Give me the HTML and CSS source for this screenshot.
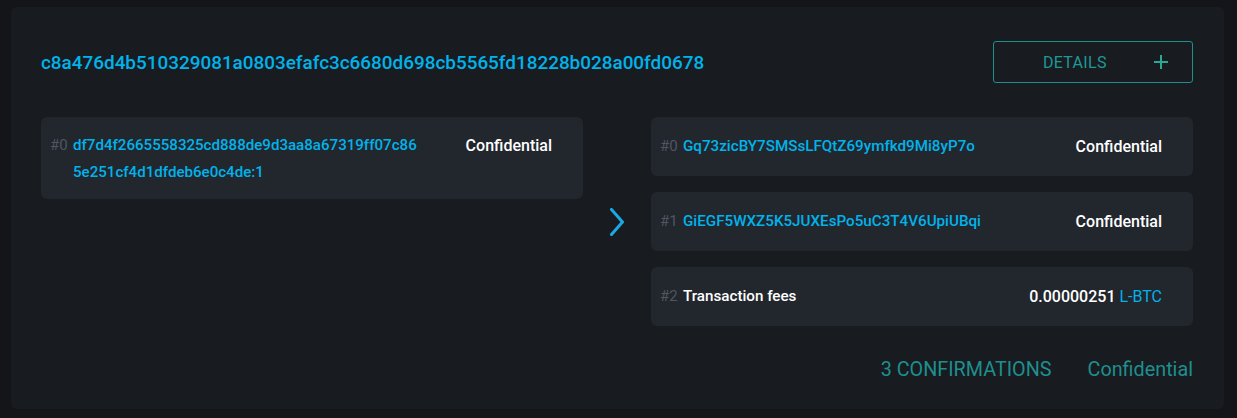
FILE: index.html
```html
<!DOCTYPE html>
<html>
<head>
<meta charset="utf-8">
<link rel="stylesheet" href="styles.css">
</head>
<body>
<div class="card">
  <div class="header">
    <a class="txid">c8a476d4b510329081a0803efafc3c6680d698cb5565fd18228b028a00fd0678</a>
    <button class="details"><span class="details-label">DETAILS</span><span class="plus"></span></button>
  </div>
  <div class="io">
    <div class="col ins">
      <div class="row row-in">
        <span class="idx">#0</span>
        <a class="addr addr-in">df7d4f2665558325cd888de9d3aa8a67319ff07c865e251cf4d1dfdeb6e0c4de:1</a>
        <span class="amt">Confidential</span>
      </div>
    </div>
    <div class="arrow">
      <svg width="16" height="28" viewBox="0 0 16 28"><path d="M2.5 1.5 L13.5 14 L2.5 26.5" fill="none" stroke="#1aa9e2" stroke-width="3" stroke-linecap="round" stroke-linejoin="round"/></svg>
    </div>
    <div class="col outs">
      <div class="row">
        <span class="idx">#0</span>
        <a class="addr">Gq73zicBY7SMSsLFQtZ69ymfkd9Mi8yP7o</a>
        <span class="amt">Confidential</span>
      </div>
      <div class="row">
        <span class="idx">#1</span>
        <a class="addr">GiEGF5WXZ5K5JUXEsPo5uC3T4V6UpiUBqi</a>
        <span class="amt">Confidential</span>
      </div>
      <div class="row">
        <span class="idx">#2</span>
        <span class="label">Transaction fees</span>
        <span class="amt">0.00000251 <span class="unit">L-BTC</span></span>
      </div>
    </div>
  </div>
  <div class="footer">
    <span>3 CONFIRMATIONS</span>
    <span>Confidential</span>
  </div>
</div>
</body>
</html>
```
FILE: styles.css
```css
html, body {
  margin: 0;
  padding: 0;
  background: #131519;
}
body {
  padding: 7px 13px 11px 11px;
  font-family: Roboto, "Liberation Sans", sans-serif;
  color: #ffffff;
}
.card {
  background: #181b20;
  border-radius: 6px;
  padding: 34px 31px 28px 30px;
}
.header {
  display: flex;
  align-items: center;
  justify-content: space-between;
  height: 42px;
}
.txid {
  color: #00b3ea;
  font-size: 18.9px;
  font-weight: 500;
}
.details {
  width: 200px;
  height: 42px;
  box-sizing: border-box;
  border: 1px solid #1f8f8d;
  border-radius: 3px;
  background: transparent;
  display: flex;
  align-items: center;
  padding: 0 24px 0 49px;
  justify-content: space-between;
  font-family: inherit;
  cursor: pointer;
}
.details-label {
  color: #1f9995;
  font-size: 16px;
  letter-spacing: 0.3px;
}
.plus {
  position: relative;
  width: 14px;
  height: 14px;
}
.plus::before, .plus::after {
  content: "";
  position: absolute;
  background: #2aa894;
}
.plus::before { left: 0; top: 6px; width: 14px; height: 2px; }
.plus::after { left: 6px; top: 0; width: 2px; height: 14px; }
.io {
  display: flex;
  margin-top: 34px;
  align-items: flex-start;
}
.col {
  width: 542px;
  display: flex;
  flex-direction: column;
  gap: 16px;
}
.arrow {
  width: 68px;
  align-self: center;
  display: flex;
  justify-content: center;
}
.row {
  background: #22262d;
  border-radius: 6px;
  height: 59px;
  box-sizing: border-box;
  display: flex;
  align-items: center;
  padding: 0 31px 0 9px;
  font-size: 15.2px;
  line-height: 27px;
}
.row-in {
  height: 82px;
  align-items: flex-start;
  padding-top: 15px;
  font-size: 15.1px;
}
.idx {
  color: #4f5661;
  width: 23px;
  flex: none;
  font-size: 15px;
}
.addr {
  color: #00b3ea;
  font-weight: 500;
  flex: 1;
}
.addr-in {
  flex: none;
  width: 346px;
  word-break: break-all;
}
.label {
  flex: 1;
  font-weight: 500;
}
.amt {
  margin-left: auto;
  font-weight: 500;
  font-size: 16px;
}
.unit {
  color: #00b3ea;
  font-weight: 400;
}
.footer {
  display: flex;
  justify-content: flex-end;
  gap: 36px;
  margin-top: 32px;
  color: #1f8f8d;
  font-size: 19.8px;
}
```
